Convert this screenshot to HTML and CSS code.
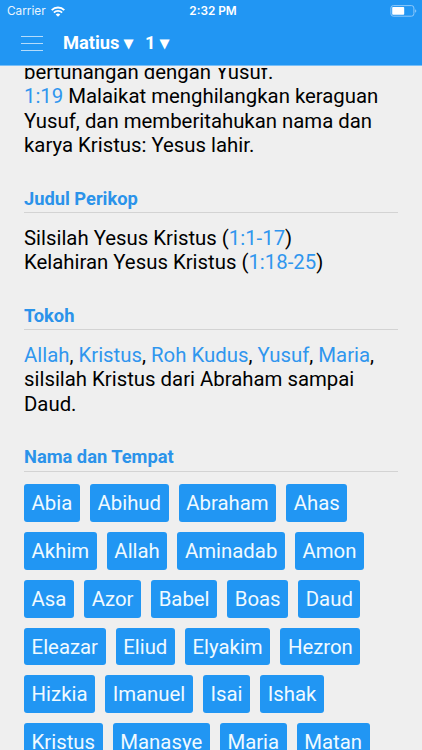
FILE: index.html
```html
<!DOCTYPE html>
<html lang="id">
<head>
    <meta charset="UTF-8">
    <meta name="viewport" content="width=device-width, initial-scale=1.0">
    <title>Matius 1</title>
    <link rel="stylesheet" href="styles.css">
</head>
<body>
    <header>
        <div class="status">
            <div class="carrier">
                <span>Carrier</span>
                <svg width="14" height="11" viewBox="0 0 14 11" fill="none" stroke="#fff" stroke-width="1.9">
                    <path d="M0.7 4.1a9 9 0 0 1 12.6 0"/>
                    <path d="M2.9 6.6a5.8 5.8 0 0 1 8.2 0"/>
                    <path d="M7 10.8L4.7 8.5a3.3 3.3 0 0 1 4.6 0z" fill="#fff" stroke="none"/>
                </svg>
            </div>
            <div class="time">2:32 PM</div>
            <div class="battery">
                <svg width="27" height="12" viewBox="0 0 27 12">
                    <rect x="0.9" y="0.6" width="23" height="10.6" rx="2.4" fill="none" stroke="#8ec9fa"/>
                    <rect x="2.2" y="2" width="12" height="7.8" rx="0.8" fill="#fff"/>
                    <path d="M25.1 4.2c1.6.6 1.6 2.9 0 3.5z" fill="#8ec9fa"/>
                </svg>
            </div>
        </div>
        <nav>
            <div class="menu"><i></i><i></i><i></i></div>
            <a class="book">Matius ▾</a>
            <a class="chapter">1 ▾</a>
        </nav>
    </header>

    <main>
        <p class="intro">bertunangan dengan Yusuf.<br>
            <a>1:19</a> Malaikat menghilangkan keraguan<br>
            Yusuf, dan memberitahukan nama dan<br>
            karya Kristus: Yesus lahir.</p>

        <h2>Judul Perikop</h2>
        <p>Silsilah Yesus Kristus (<a>1:1-17</a>)<br>
            Kelahiran Yesus Kristus (<a>1:18-25</a>)</p>

        <h2>Tokoh</h2>
        <p><a>Allah</a>, <a>Kristus</a>, <a>Roh Kudus</a>, <a>Yusuf</a>, <a>Maria</a>,<br>
            silsilah Kristus dari Abraham sampai<br>
            Daud.</p>

        <h2>Nama dan Tempat</h2>
        <div class="tags">
            <div class="row"><a>Abia</a><a>Abihud</a><a>Abraham</a><a>Ahas</a></div>
            <div class="row"><a>Akhim</a><a>Allah</a><a>Aminadab</a><a>Amon</a></div>
            <div class="row"><a>Asa</a><a>Azor</a><a>Babel</a><a>Boas</a><a>Daud</a></div>
            <div class="row"><a>Eleazar</a><a>Eliud</a><a>Elyakim</a><a>Hezron</a></div>
            <div class="row"><a>Hizkia</a><a>Imanuel</a><a>Isai</a><a>Ishak</a></div>
            <div class="row"><a>Kristus</a><a>Manasye</a><a>Maria</a><a>Matan</a></div>
        </div>
    </main>
</body>
</html>
```

FILE: styles.css
```css
* { box-sizing: border-box; }
body { margin: 0; height: 750px; display: flex; flex-direction: column; overflow: hidden; background: #efefef; font-family: Roboto, sans-serif; font-size: 20.35px; line-height: 24.45px; color: #000; }
header { flex: none; height: 66px; margin-bottom: 2px; background: #2196f3; border-bottom: 1px solid #78bff8; color: #fff; }
.status { display: grid; grid-template-columns: 1fr auto 1fr; align-items: center; height: 22px; padding: 0 5px 0 7px; font-family: Inter, sans-serif; font-size: 11.8px; line-height: 22px; }
.carrier { display: flex; align-items: center; gap: 5px; }
.carrier span { opacity: 0.9; }
.time { font-weight: 600; padding-left: 2px; }
.battery { display: flex; justify-content: flex-end; }
.status svg { display: block; }
nav { display: flex; align-items: center; height: 43px; padding-left: 21px; font-size: 18.3px; font-weight: bold; }
.menu { display: flex; flex-direction: column; gap: 6px; width: 22px; margin-right: 20px; }
.menu i { height: 1px; background: #b5dcfb; }
.book { margin-right: 12px; }
main { flex: 1; min-height: 0; overflow: hidden; padding: 0 24px; }
main a { color: #2f96ee; }
p { margin: 0; white-space: nowrap; }
.intro { margin-top: -8px; }
h2 { margin: 28.8px 0 12.6px; padding-bottom: 0.9px; border-bottom: 1px solid #d3d3d3; font-size: 18.3px; line-height: 24.8px; color: #2b93ea; }
.tags { display: flex; flex-direction: column; gap: 10px; margin-top: -0.2px; }
.row { display: flex; gap: 10px; }
.tags a { height: 37.8px; padding: 0 7.6px; border-radius: 3px; background: #2196f3; color: #f0faff; line-height: 38.3px; }
```
